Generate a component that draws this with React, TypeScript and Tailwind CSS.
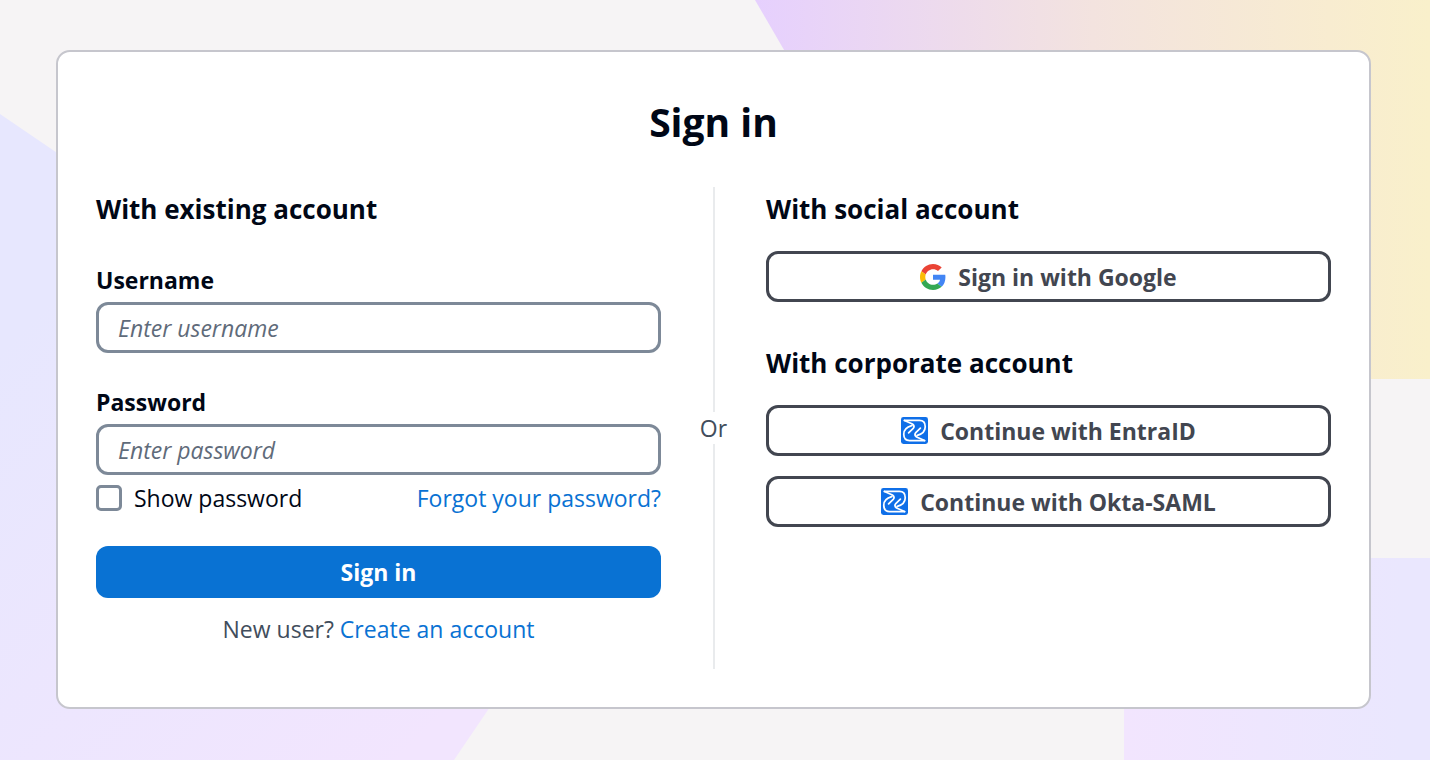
import { useId, useState } from "react";
import type { ReactNode } from "react";

function Backdrop() {
  return (
    <svg className="absolute inset-0 h-full w-full" viewBox="0 0 1430 760" preserveAspectRatio="none" aria-hidden="true">
      <defs>
        <linearGradient id="sunrise" gradientUnits="userSpaceOnUse" x1="755" y1="0" x2="1430" y2="0">
          <stop offset="0" stopColor="#e6d0fe" />
          <stop offset="0.5" stopColor="#f3e3df" />
          <stop offset="0.85" stopColor="#f8ecd0" />
          <stop offset="1" stopColor="#f9f0cb" />
        </linearGradient>
        <linearGradient id="lilac" gradientUnits="userSpaceOnUse" x1="0" y1="350" x2="400" y2="760">
          <stop offset="0" stopColor="#e7e7fe" />
          <stop offset="1" stopColor="#f2e5fe" />
        </linearGradient>
        <linearGradient id="corner" gradientUnits="userSpaceOnUse" x1="1124" y1="0" x2="1400" y2="0">
          <stop offset="0" stopColor="#f2e5fe" />
          <stop offset="1" stopColor="#eae7fe" />
        </linearGradient>
      </defs>
      <path d="M755 0H1430V379H975Z" fill="url(#sunrise)" />
      <path d="M0 114L530 475V648L454 760H0Z" fill="url(#lilac)" />
      <path d="M1124 558H1430V760H1124Z" fill="url(#corner)" />
    </svg>
  );
}

function GoogleIcon() {
  return (
    <svg className="size-[26px]" viewBox="0 0 48 48" aria-hidden="true">
      <path fill="#EA4335" d="M24 9.5c3.54 0 6.71 1.22 9.21 3.6l6.85-6.85C35.9 2.38 30.47 0 24 0 14.62 0 6.51 5.38 2.56 13.22l7.98 6.19C12.43 13.72 17.74 9.5 24 9.5z" />
      <path fill="#4285F4" d="M46.98 24.55c0-1.57-.15-3.09-.38-4.55H24v9.02h12.94c-.58 2.96-2.26 5.48-4.78 7.18l7.73 6c4.51-4.18 7.09-10.36 7.09-17.65z" />
      <path fill="#FBBC05" d="M10.53 28.59c-.48-1.45-.76-2.99-.76-4.59s.27-3.14.76-4.59l-7.98-6.19C.92 16.46 0 20.12 0 24c0 3.88.92 7.54 2.56 10.78l7.97-6.19z" />
      <path fill="#34A853" d="M24 48c6.48 0 11.93-2.13 15.89-5.81l-7.73-6c-2.15 1.45-4.92 2.3-8.16 2.3-6.26 0-11.57-4.22-13.47-9.91l-7.98 6.19C6.51 42.62 14.62 48 24 48z" />
    </svg>
  );
}

function IdentityIcon() {
  return (
    <svg className="size-[27px]" viewBox="0 0 78 78" fill="none" aria-hidden="true">
      <rect width="78" height="78" rx="7" fill="#0f6fe8" />
      {/* one ribbon, repeated after a half turn */}
      <g stroke="#fff" strokeWidth="5" strokeLinecap="round" strokeLinejoin="round">
        <path d="M10 10H53C64 10 70 17 70 28C70 40 62 49 47 53M56 32L42 46C39 50 40 54 45 58L68 68" />
        <path d="M10 10H53C64 10 70 17 70 28C70 40 62 49 47 53M56 32L42 46C39 50 40 54 45 58L68 68" transform="rotate(180 39 39)" />
      </g>
    </svg>
  );
}

function ProviderButton({ icon, children }: { icon: ReactNode; children: ReactNode }) {
  return (
    <button
      type="button"
      className="flex h-[51px] w-full items-center justify-center gap-3 rounded-xl border-3 border-[#424650] bg-white font-bold text-[#424650]"
    >
      {icon}
      <span>{children}</span>
    </button>
  );
}

function TextField({ label, type, placeholder }: { label: string; type: string; placeholder: string }) {
  const id = useId();
  return (
    <div>
      <label htmlFor={id} className="block font-bold">{label}</label>
      <input
        id={id}
        type={type}
        placeholder={placeholder}
        className="mt-[6px] block h-[51px] w-full rounded-xl border-3 border-[#7d8998] bg-white px-[19px] placeholder:italic placeholder:text-[#5f6b7a]"
      />
    </div>
  );
}

export default function App() {
  const [showPassword, setShowPassword] = useState(false);

  return (
    <div className="relative min-h-screen bg-[#f6f4f5] pt-[50px] pr-[59px] pb-[50px] pl-14 font-['Open_Sans','Noto_Sans',sans-serif] text-[23px] leading-[32px] text-[#000716]">
      <Backdrop />

      <main className="relative rounded-[14px] border-2 border-[#c6c6cd] bg-white p-[38px]">
        <h1 className="mt-[7px] text-center text-[39px] leading-[50px] font-bold">Sign in</h1>

        <div className="mt-10 grid grid-cols-[1fr_105px_1fr]">
          {/* existing account */}
          <form className="pb-6" onSubmit={(e) => e.preventDefault()}>
            <h2 className="text-[26px] leading-[44px] font-bold">With existing account</h2>
            <div className="mt-[33px] space-y-[33px]">
              <TextField label="Username" type="text" placeholder="Enter username" />
              <TextField label="Password" type={showPassword ? "text" : "password"} placeholder="Enter password" />
            </div>

            <div className="mt-[7px] flex items-center justify-between">
              <label className="flex items-center gap-3">
                <input
                  type="checkbox"
                  checked={showPassword}
                  onChange={(e) => setShowPassword(e.target.checked)}
                  className="size-[26px] appearance-none rounded-[5px] border-3 border-[#7d8998] bg-white checked:bg-[#0972d3]"
                />
                Show password
              </label>
              <a href="#forgot" className="text-[#0972d3]">Forgot your password?</a>
            </div>

            <button type="submit" className="mt-8 h-[52px] w-full rounded-xl bg-[#0972d3] font-bold text-white">
              Sign in
            </button>
            <p className="mt-[15px] text-center text-[#414d5c]">
              New user? <a href="#signup" className="text-[#0972d3]">Create an account</a>
            </p>
          </form>

          {/* divider */}
          <div className="flex flex-col items-center text-[#414d5c]">
            <div className="w-[2px] flex-1 bg-[#e9ebed]" />
            <span>Or</span>
            <div className="w-[2px] flex-1 bg-[#e9ebed]" />
          </div>

          {/* external providers */}
          <div>
            <section>
              <h2 className="text-[26px] leading-[44px] font-bold">With social account</h2>
              <div className="mt-5">
                <ProviderButton icon={<GoogleIcon />}>Sign in with Google</ProviderButton>
              </div>
            </section>
            <section className="mt-[39px]">
              <h2 className="text-[26px] leading-[44px] font-bold">With corporate account</h2>
              <div className="mt-5 space-y-5">
                <ProviderButton icon={<IdentityIcon />}>Continue with EntraID</ProviderButton>
                <ProviderButton icon={<IdentityIcon />}>Continue with Okta-SAML</ProviderButton>
              </div>
            </section>
          </div>
        </div>
      </main>
    </div>
  );
}
